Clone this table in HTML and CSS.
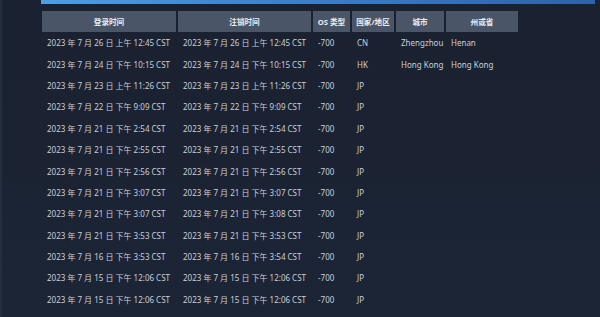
FILE: index.html
```html
<!DOCTYPE html>
<html lang="zh">
<head>
<meta charset="utf-8">
<link rel="stylesheet" href="styles.css">
</head>
<body>
<div class="page">
  <div class="topbar"></div>
  <div class="log" role="table">
    <div class="th">登录时间</div><div class="th">注销时间</div><div class="th">OS 类型</div><div class="th">国家/地区</div><div class="th">城市</div><div class="th">州或省</div>
    <div class="td">2023 年 7 月 26 日 上午 12:45 CST</div><div class="td">2023 年 7 月 26 日 上午 12:45 CST</div><div class="td">-700</div><div class="td">CN</div><div class="td">Zhengzhou</div><div class="td">Henan</div>
    <div class="td">2023 年 7 月 24 日 下午 10:15 CST</div><div class="td">2023 年 7 月 24 日 下午 10:15 CST</div><div class="td">-700</div><div class="td">HK</div><div class="td">Hong Kong</div><div class="td">Hong Kong</div>
    <div class="td">2023 年 7 月 23 日 上午 11:26 CST</div><div class="td">2023 年 7 月 23 日 上午 11:26 CST</div><div class="td">-700</div><div class="td">JP</div><div class="td"></div><div class="td"></div>
    <div class="td">2023 年 7 月 22 日 下午 9:09 CST</div><div class="td">2023 年 7 月 22 日 下午 9:09 CST</div><div class="td">-700</div><div class="td">JP</div><div class="td"></div><div class="td"></div>
    <div class="td">2023 年 7 月 21 日 下午 2:54 CST</div><div class="td">2023 年 7 月 21 日 下午 2:54 CST</div><div class="td">-700</div><div class="td">JP</div><div class="td"></div><div class="td"></div>
    <div class="td">2023 年 7 月 21 日 下午 2:55 CST</div><div class="td">2023 年 7 月 21 日 下午 2:55 CST</div><div class="td">-700</div><div class="td">JP</div><div class="td"></div><div class="td"></div>
    <div class="td">2023 年 7 月 21 日 下午 2:56 CST</div><div class="td">2023 年 7 月 21 日 下午 2:56 CST</div><div class="td">-700</div><div class="td">JP</div><div class="td"></div><div class="td"></div>
    <div class="td">2023 年 7 月 21 日 下午 3:07 CST</div><div class="td">2023 年 7 月 21 日 下午 3:07 CST</div><div class="td">-700</div><div class="td">JP</div><div class="td"></div><div class="td"></div>
    <div class="td">2023 年 7 月 21 日 下午 3:07 CST</div><div class="td">2023 年 7 月 21 日 下午 3:08 CST</div><div class="td">-700</div><div class="td">JP</div><div class="td"></div><div class="td"></div>
    <div class="td">2023 年 7 月 21 日 下午 3:53 CST</div><div class="td">2023 年 7 月 21 日 下午 3:53 CST</div><div class="td">-700</div><div class="td">JP</div><div class="td"></div><div class="td"></div>
    <div class="td">2023 年 7 月 16 日 下午 3:53 CST</div><div class="td">2023 年 7 月 16 日 下午 3:54 CST</div><div class="td">-700</div><div class="td">JP</div><div class="td"></div><div class="td"></div>
    <div class="td">2023 年 7 月 15 日 下午 12:06 CST</div><div class="td">2023 年 7 月 15 日 下午 12:06 CST</div><div class="td">-700</div><div class="td">JP</div><div class="td"></div><div class="td"></div>
    <div class="td">2023 年 7 月 15 日 下午 12:06 CST</div><div class="td">2023 年 7 月 15 日 下午 12:06 CST</div><div class="td">-700</div><div class="td">JP</div><div class="td"></div><div class="td"></div>
  </div>
</div>
</body>
</html>
```
FILE: styles.css
```css
html, body {
  margin: 0;
  padding: 0;
  background: #1b2334;
  overflow: hidden;
}
.page {
  width: 600px;
  height: 317px;
  background: linear-gradient(180deg, #1a2130 0%, #1c2536 100%);
  border-left: 2px solid #252e3f;
  box-sizing: border-box;
  font-family: "Noto Sans", "Noto Sans CJK SC", sans-serif;
  color: #c9d0d8;
}
.topbar {
  margin-left: 39px;
  width: 554px;
  height: 4px;
  background: linear-gradient(90deg, #4f9de3 0%, #3f83cc 40%, #2e62a8 100%);
}
.log {
  margin-top: 7px;
  margin-left: 40px;
  display: grid;
  grid-template-columns: 134px 133px 37px 42px 48px 72px;
  grid-template-rows: 21px;
  grid-auto-rows: 21.4px;
  column-gap: 2px;
  font-size: 8px;
}
.th {
  background: #4a5568;
  color: #e8edf2;
  font-size: 7.6px;
  font-weight: 700;
  display: flex;
  align-items: center;
  justify-content: center;
  white-space: nowrap;
}
.td {
  display: flex;
  align-items: center;
  padding-left: 5px;
  white-space: nowrap;
}
```
